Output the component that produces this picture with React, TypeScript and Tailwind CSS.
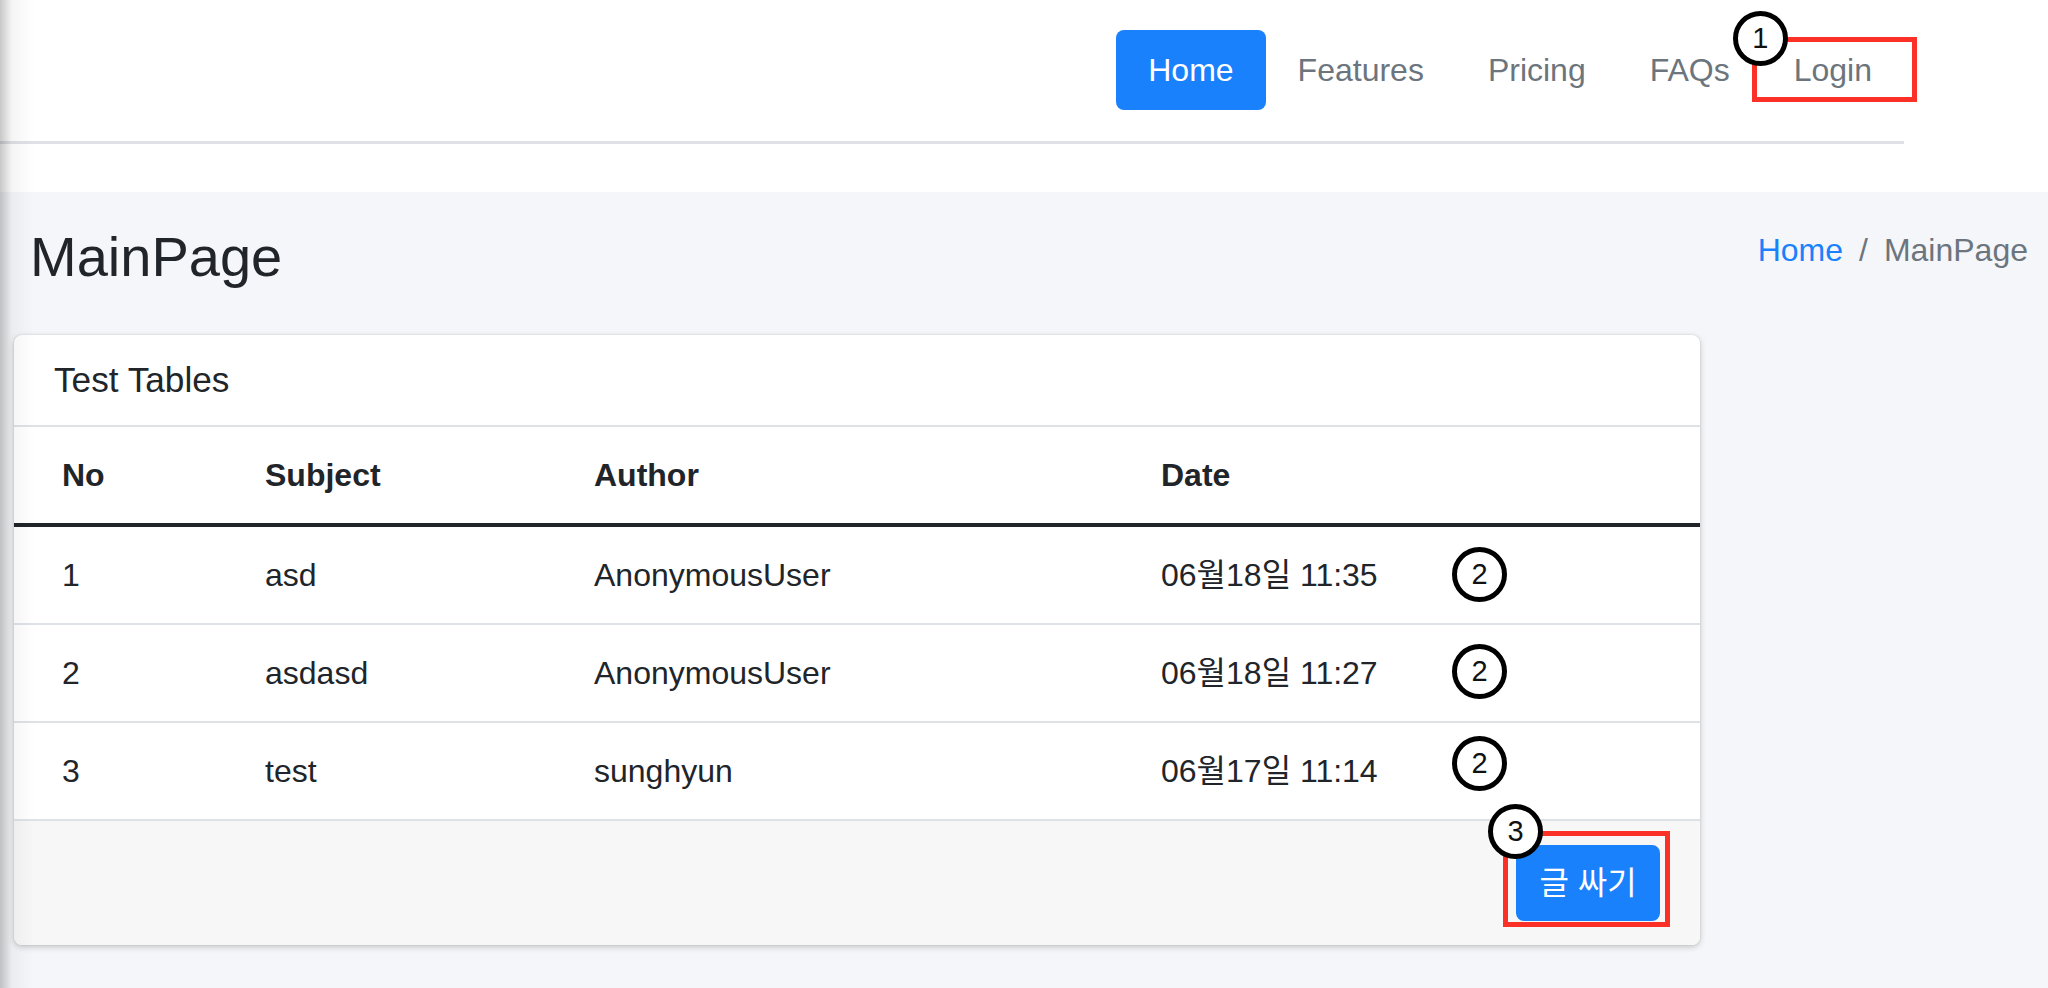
import React from 'react';

const navItems = ['Home', 'Features', 'Pricing', 'FAQs', 'Login'];

const rows = [
  {no: 1, subject: 'asd', author: 'AnonymousUser', date: '06월18일 11:35', mark: 'top-[20px]'},
  {no: 2, subject: 'asdasd', author: 'AnonymousUser', date: '06월18일 11:27', mark: 'top-[19px]'},
  {no: 3, subject: 'test', author: 'sunghyun', date: '06월17일 11:14', mark: 'top-[13px]'},
];

function Marker({n, className}: {n: number; className: string}) {
  return (
    <span
      className={`absolute flex h-[55px] w-[55px] items-center justify-center rounded-full border-[5px] border-black bg-white text-[29px] leading-none text-[#111] ${className}`}>
      {n}
    </span>
  );
}

export default function App() {
  return (
    <div className="relative h-[988px] w-full overflow-hidden bg-[#f4f6f9] font-['Liberation_Sans','Noto_Sans_CJK_KR',sans-serif] text-[#212529]">
      {/* top header */}
      <div className="bg-white pb-[48px]">
        <header className="flex w-[1904px] justify-end border-b-[3px] border-[#dee2e6] pb-[31px] pt-[30px]">
          <ul className="flex">
            {navItems.map((item) => (
              <li key={item} className="relative">
                <a
                  className={
                    item === 'Home'
                      ? 'block rounded-[8px] bg-[#1a81fc] px-[32px] py-[16px] text-[32px] leading-[48px] text-white'
                      : 'block px-[32px] py-[16px] text-[32px] leading-[48px] text-[#6c757d]'
                  }>
                  {item}
                </a>
                {item === 'Login' && (
                  <>
                    <span className="absolute left-[-10px] top-[7px] h-[65px] w-[165px] border-[5px] border-[#fb3127]"/>
                    <Marker n={1} className="left-[-29px] top-[-19px]"/>
                  </>
                )}
              </li>
            ))}
          </ul>
        </header>
      </div>

      {/* content header */}
      <div className="flex items-start justify-between pl-[30px] pr-[20px] pt-[30px]">
        <h1 className="text-[56px] leading-[69px] font-normal">MainPage</h1>
        <ol className="flex text-[32px] leading-[57.6px]">
          <li className="text-[#1a81fc]">Home</li>
          <li className="pl-[16px] text-[#6c757d]">
            <span className="pr-[16px]">/</span>MainPage
          </li>
        </ol>
      </div>

      {/* card */}
      <div className="ml-[14px] mt-[44px] w-[1686px] overflow-hidden rounded-[8px] bg-white shadow-[0_0_2px_rgba(0,0,0,0.125),0_2px_6px_rgba(0,0,0,0.2)]">
        <div className="border-b-[2px] border-[#dee2e6] px-[40px] py-[24px] text-[35.2px] leading-[42px]">
          Test Tables
        </div>
        <table className="w-full table-fixed border-collapse text-left text-[32px] leading-[48px]">
          <colgroup>
            <col className="w-[227px]"/>
            <col className="w-[329px]"/>
            <col className="w-[567px]"/>
            <col/>
          </colgroup>
          <thead>
            <tr className="border-b-[4px] border-[#212529]">
              <th className="py-[24px] pl-[48px] font-bold">No</th>
              <th className="py-[24px] pl-[24px] font-bold">Subject</th>
              <th className="py-[24px] pl-[24px] font-bold">Author</th>
              <th className="py-[24px] pl-[24px] font-bold">Date</th>
            </tr>
          </thead>
          <tbody>
            {rows.map((r) => (
              <tr key={r.no} className="border-b-[2px] border-[#dee2e6]">
                <td className="py-[24px] pl-[48px]">{r.no}</td>
                <td className="py-[24px] pl-[24px]">{r.subject}</td>
                <td className="py-[24px] pl-[24px]">{r.author}</td>
                <td className="relative py-[24px] pl-[24px]">
                  {r.date}
                  <Marker n={2} className={`left-[315px] ${r.mark}`}/>
                </td>
              </tr>
            ))}
          </tbody>
        </table>
        <div className="flex justify-end bg-[#f7f7f7] px-[40px] py-[24px]">
          <div className="relative">
            <button className="w-[144px] rounded-[8px] border-[2px] border-[#1a81fc] bg-[#1a81fc] py-[12px] text-center text-[32px] leading-[48px] text-white">
              글 싸기
            </button>
            <span className="absolute left-[-13px] top-[-14px] h-[96px] w-[167px] border-[5px] border-[#fb3127]"/>
            <Marker n={3} className="left-[-28px] top-[-41px]"/>
          </div>
        </div>
      </div>

      {/* left edge shadow */}
      <div className="pointer-events-none absolute inset-y-0 left-0 w-[34px] bg-linear-to-r from-[rgba(0,0,0,0.22)] via-[rgba(0,0,0,0.04)] via-35% to-transparent"/>
    </div>
  );
}
